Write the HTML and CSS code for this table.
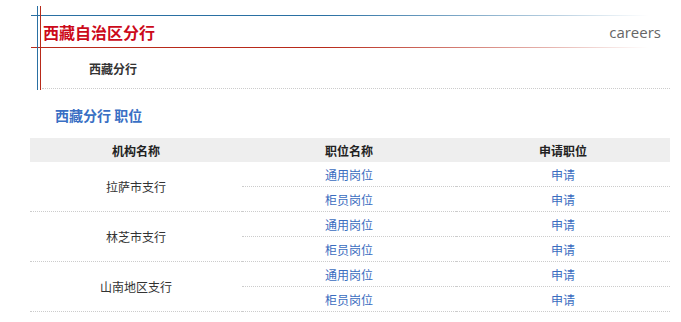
FILE: index.html
```html
<!DOCTYPE html>
<html lang="zh-CN">
<head>
<meta charset="utf-8">
<title>西藏自治区分行 careers</title>
<link rel="stylesheet" href="styles.css">
</head>
<body>
<div class="page">
  <div class="masthead">
    <div class="banner">
      <h1 class="branch-title">西藏自治区分行</h1>
      <span class="careers">careers</span>
    </div>
    <div class="sub-nav"><span class="sub-item">西藏分行</span></div>
  </div>

  <h2 class="section-title">西藏分行 职位</h2>

  <table class="jobs">
    <thead>
      <tr><th class="c-org">机构名称</th><th class="c-pos">职位名称</th><th class="c-apply">申请职位</th></tr>
    </thead>
    <tbody>
      <tr><td class="org" rowspan="2">拉萨市支行</td><td><a href="#">通用岗位</a></td><td><a href="#">申请</a></td></tr>
      <tr><td><a href="#">柜员岗位</a></td><td><a href="#">申请</a></td></tr>
      <tr><td class="org" rowspan="2">林芝市支行</td><td><a href="#">通用岗位</a></td><td><a href="#">申请</a></td></tr>
      <tr><td><a href="#">柜员岗位</a></td><td><a href="#">申请</a></td></tr>
      <tr><td class="org" rowspan="2">山南地区支行</td><td><a href="#">通用岗位</a></td><td><a href="#">申请</a></td></tr>
      <tr><td><a href="#">柜员岗位</a></td><td><a href="#">申请</a></td></tr>
    </tbody>
  </table>
</div>
</body>
</html>
```
FILE: styles.css
```css
html, body {
  margin: 0;
  padding: 0;
  background: #fff;
}

body {
  font-family: "Noto Sans CJK SC", "Noto Sans", sans-serif;
  font-size: 12px;
  color: #333;
}

.page {
  width: 640px;
  padding: 6px 0 0 30px;
}

/* top block with the double blue/red rules */
.masthead {
  position: relative;
  box-sizing: border-box;
  height: 84px;
  padding-top: 9px;
}

.masthead::before,
.masthead::after {
  content: "";
  position: absolute;
  top: 0;
  bottom: 0;
  width: 1px;
}

.masthead::before {
  left: 7px;
  background: #2a70a3;
}

.masthead::after {
  left: 10px;
  background: #b82a1a;
}

.banner {
  margin-left: 1px;
  width: 650px;
  height: 33px;
  display: flex;
  align-items: center;
  justify-content: space-between;
  background:
    linear-gradient(to right, #2a70a3 0%, #2a70a3 45%, rgba(42,112,163,0.35) 80%, rgba(42,112,163,0) 95%) top left / 100% 1px no-repeat,
    linear-gradient(to right, #b82a1a 0%, #b82a1a 45%, rgba(184,42,26,0.35) 80%, rgba(184,42,26,0) 95%) bottom left / 100% 1px no-repeat;
}

.branch-title {
  margin: 0 0 0 12px;
  font-size: 16px;
  font-weight: bold;
  color: #cc0a1a;
  line-height: 20px;
}

.careers {
  margin-right: 20px;
  font-family: "Open Sans", "Noto Sans", sans-serif;
  font-size: 15px;
  color: #666;
  line-height: 20px;
}

.sub-nav {
  margin-left: 12px;
  height: 40px;
  display: flex;
  align-items: center;
  border-bottom: 1px dotted #ccc;
}

.sub-item {
  margin-left: 47px;
  font-weight: bold;
  color: #333;
}

.section-title {
  margin: 15px 0 13px 25px;
  font-size: 14px;
  font-weight: bold;
  color: #3a6fc4;
  line-height: 20px;
}

.jobs {
  width: 640px;
  border-collapse: collapse;
  table-layout: fixed;
}

.jobs th {
  height: 24px;
  padding: 0;
  background: #eeeeee;
  font-weight: bold;
  color: #222;
  text-align: center;
}

.c-org { width: 212px; }
.c-pos { width: 214px; }

.jobs td {
  height: 24px;
  padding: 0;
  text-align: center;
  border-bottom: 1px dotted #ccc;
}

.jobs td.org {
  color: #333;
}

.jobs a {
  color: #3a6cc0;
  text-decoration: none;
}
```
